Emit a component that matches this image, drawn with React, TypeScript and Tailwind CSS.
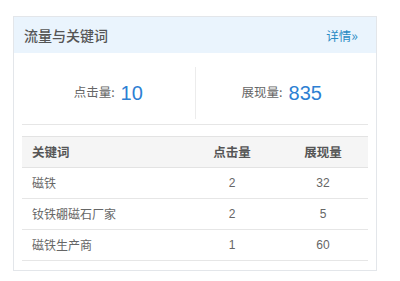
const rows = [
  { keyword: "磁铁", clicks: 2, views: 32 },
  { keyword: "钕铁硼磁石厂家", clicks: 2, views: 5 },
  { keyword: "磁铁生产商", clicks: 1, views: 60 },
];

const App = () => {
  return (
    <div className="w-[400px] h-[281px] bg-white pt-4 pl-[13px] font-['Microsoft_YaHei','Noto_Sans_CJK_SC',sans-serif]">
      <div className="w-[364px] h-[255px] border border-[#e3e6ea] bg-white">
        {/* header */}
        <div className="h-9 bg-[#eaf4fd] flex items-center justify-between pl-[10px] pr-[18px]">
          <span className="text-[14px] text-[#555] font-medium">流量与关键词</span>
          <a className="text-[12.5px] text-[#2a8bc4]">详情<span className="text-[14px]">»</span></a>
        </div>

        <div className="px-2">
          {/* stats */}
          <div className="h-[72px] pt-2 flex items-center border-b border-[#e6e6e6]">
            <div className="flex-1 flex items-center justify-center gap-[6px]">
              <span className="text-[12.5px] text-[#666]">点击量:</span>
              <span className="text-[20px] text-[#2d7fd3] font-['Liberation_Sans',sans-serif] leading-none">10</span>
            </div>
            <div className="w-px h-[52px] bg-[#ececec]" />
            <div className="flex-1 flex items-center justify-center gap-[6px]">
              <span className="text-[12.5px] text-[#666]">展现量:</span>
              <span className="text-[20px] text-[#2d7fd3] font-['Liberation_Sans',sans-serif] leading-none">835</span>
            </div>
          </div>

          {/* table */}
          <table className="mt-[11px] w-full border-collapse text-[12px] text-[#666]">
            <thead>
              <tr className="h-[31px] bg-[#f5f5f5] border-t border-b border-[#e3e3e3]">
                <th className="w-[164px] text-left pl-[10px] font-bold text-[#555] text-[12.5px]">关键词</th>
                <th className="w-[92px] text-center font-bold text-[#555] text-[12.5px]">点击量</th>
                <th className="text-center font-bold text-[#555] text-[12.5px]">展现量</th>
              </tr>
            </thead>
            <tbody>
              {rows.map((r, i) => (
                <tr key={i} className="h-[31px] border-b border-[#e6e6e6]">
                  <td className="pl-[10px]">{r.keyword}</td>
                  <td className="text-center font-['Liberation_Sans',sans-serif]">{r.clicks}</td>
                  <td className="text-center font-['Liberation_Sans',sans-serif]">{r.views}</td>
                </tr>
              ))}
            </tbody>
          </table>
        </div>
      </div>
    </div>
  );
};

export default App;
